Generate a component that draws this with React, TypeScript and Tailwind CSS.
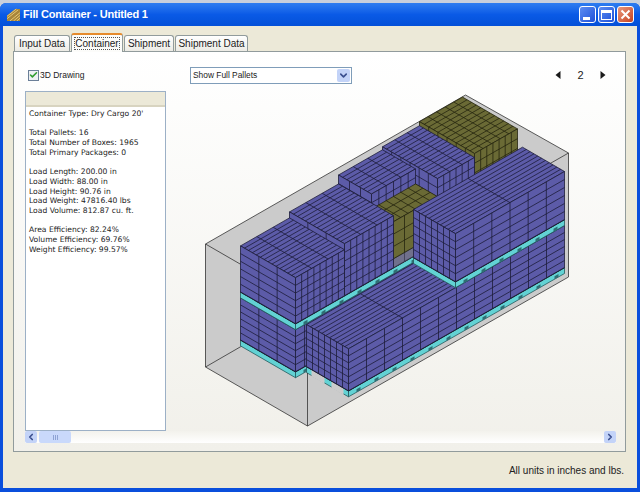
import { ChevronLeft, ChevronRight, Check, ChevronDown } from 'lucide-react';

const PURPLE = '#5c5ba8';
const OLIVE = '#6a6a35';
const CYAN = '#62d2d4';
const EDGE = '#1d1d3a';

type Box = {
  l0: number; l1: number; w0: number; w1: number; h0: number; h1: number;
  fill?: string;
  edge?: string;
  // divisions: right face columns, left face columns, rows, top stripes along l, top blocks along w
  cr?: number; cl?: number; rows?: number; ts?: number; tb?: number;
};

function p(l: number, w: number, h: number): [number, number] {
  return [307 + l - w, 426 - 0.571 * l - 0.578 * w - h];
}

function pts(list: [number, number][]) {
  return list.map((q) => `${q[0].toFixed(1)},${q[1].toFixed(1)}`).join(' ');
}

function Crate({ b }: { b: Box }) {
  const { l0, l1, w0, w1, h0, h1, fill = PURPLE, edge = EDGE, cr = 0, cl = 0, rows = 0, ts = 0, tb = 0 } = b;
  const lines: [number, number][][] = [];
  for (let i = 1; i < cr; i++) {
    const l = l0 + ((l1 - l0) * i) / cr;
    lines.push([p(l, w0, h0), p(l, w0, h1)]);
  }
  for (let i = 1; i < cl; i++) {
    const w = w0 + ((w1 - w0) * i) / cl;
    lines.push([p(l0, w, h0), p(l0, w, h1)]);
  }
  for (let i = 1; i < rows; i++) {
    const h = h0 + ((h1 - h0) * i) / rows;
    lines.push([p(l0, w1, h), p(l0, w0, h)]);
    lines.push([p(l0, w0, h), p(l1, w0, h)]);
  }
  for (let i = 1; i < ts; i++) {
    const w = w0 + ((w1 - w0) * i) / ts;
    lines.push([p(l0, w, h1), p(l1, w, h1)]);
  }
  for (let i = 1; i < tb; i++) {
    const l = l0 + ((l1 - l0) * i) / tb;
    lines.push([p(l, w0, h1), p(l, w1, h1)]);
  }
  return (
    <g stroke={edge} strokeWidth={0.8}>
      <polygon fill={fill} points={pts([p(l0, w0, h1), p(l1, w0, h1), p(l1, w1, h1), p(l0, w1, h1)])} />
      <polygon fill={fill} points={pts([p(l0, w1, h0), p(l0, w0, h0), p(l0, w0, h1), p(l0, w1, h1)])} />
      <polygon fill={fill} points={pts([p(l0, w0, h0), p(l1, w0, h0), p(l1, w0, h1), p(l0, w0, h1)])} />
      {lines.map((q, i) => (
        <line key={i} x1={q[0][0]} y1={q[0][1]} x2={q[1][0]} y2={q[1][1]} />
      ))}
    </g>
  );
}

function Pallet({ l0, l1, w0, w1, h, open }: { l0: number; l1: number; w0: number; w1: number; h: number; open?: boolean }) {
  const notches: number[] = [];
  for (let l = l0 + 8; l < l1; l += 18) notches.push(l);
  const gaps = [
    [w0 + 5, w0 + 17],
    [w0 + 24, w1 - 5],
  ];
  return (
    <g>
      <Crate b={{ l0, l1, w0, w1, h0: h, h1: h + 6, fill: CYAN, edge: '#23595c' }} />
      {notches.map((l) => (
        <polygon key={l} fill="#2f6f74" points={pts([p(l, w0, h), p(l + 4, w0, h), p(l + 4, w0, h + 3), p(l, w0, h + 3)])} />
      ))}
      {open &&
        gaps.map(([a, b]) => (
          <polygon key={a} fill="#cbcbcb" points={pts([p(l0, a, h - 1), p(l0, b, h - 1), p(l0, b, h + 6), p(l0, a, h + 6)])} />
        ))}
      <line x1={p(l0, w0, h + 6)[0]} y1={p(l0, w0, h + 6)[1]} x2={p(l1, w0, h + 6)[0]} y2={p(l1, w0, h + 6)[1]} stroke="#111" strokeWidth={1.2} />
      <line x1={p(l0, w1, h + 6)[0]} y1={p(l0, w1, h + 6)[1]} x2={p(l0, w0, h + 6)[0]} y2={p(l0, w0, h + 6)[1]} stroke="#111" strokeWidth={1.2} />
    </g>
  );
}

function ContainerDrawing() {
  const hull: [number, number][] = [[205, 244], [465, 95], [568, 153], [568, 277], [307, 426], [205, 367]];
  return (
    <svg viewBox="166 91 449 340" className="w-full h-full block">
      <polygon points={pts(hull)} fill="#cbcbcb" stroke="#333" strokeWidth={0.8} />
      <line x1={205} y1={367} x2={250} y2={341} stroke="#333" strokeWidth={0.8} />
      <line x1={205} y1={244} x2={250} y2={270} stroke="#333" strokeWidth={0.8} />
      <line x1={568} y1={153} x2={540} y2={169} stroke="#333" strokeWidth={0.8} />

      {/* back row, lower layer */}
      <Pallet l0={36} l1={262} w0={48} w1={103} h={0} />
      <Crate b={{ l0: 36, l1: 262, w0: 48, w1: 103, h0: 6, h1: 48, cr: 25, cl: 3, rows: 6 }} />
      <Pallet l0={36} l1={262} w0={48} w1={103} h={48} />

      {/* back row, upper layer, far end first */}
      <Crate b={{ l0: 215, l1: 258, w0: 48, w1: 103, h0: 54, h1: 122, fill: OLIVE, edge: '#26260f', cr: 7, cl: 6, rows: 7, ts: 12, tb: 5 }} />
      <Crate b={{ l0: 178, l1: 215, w0: 48, w1: 103, h0: 54, h1: 118, cr: 6, cl: 6, rows: 7, ts: 14, tb: 3 }} />
      <Crate b={{ l0: 134, l1: 178, w0: 70, w1: 103, h0: 54, h1: 115, cr: 6, cl: 3, rows: 7, ts: 8, tb: 3 }} />
      <Crate b={{ l0: 134, l1: 178, w0: 48, w1: 70, h0: 54, h1: 63, fill: '#70708c', edge: '#3a3a50', cr: 4, cl: 2 }} />
      <Crate b={{ l0: 134, l1: 178, w0: 48, w1: 70, h0: 63, h1: 100, fill: OLIVE, edge: '#26260f', cr: 4, cl: 2, rows: 3, ts: 3, tb: 6 }} />
      <Crate b={{ l0: 85, l1: 134, w0: 48, w1: 103, h0: 54, h1: 106, cr: 8, cl: 3, rows: 6, ts: 14, tb: 3 }} />
      <Crate b={{ l0: 36, l1: 85, w0: 48, w1: 103, h0: 54, h1: 100, cr: 8, cl: 3, rows: 6, ts: 14, tb: 3 }} />

      {/* front row */}
      <Pallet l0={46} l1={262} w0={5} w1={47} h={0} open />
      <Crate b={{ l0: 46, l1: 262, w0: 5, w1: 47, h0: 6, h1: 48, cr: 12, cl: 7, rows: 6, ts: 11, tb: 4 }} />
      <Pallet l0={153} l1={262} w0={5} w1={47} h={48} />
      <Crate b={{ l0: 153, l1: 262, w0: 5, w1: 47, h0: 54, h1: 102, cr: 6, cl: 7, rows: 6, ts: 11, tb: 2 }} />

      <line x1={307} y1={373} x2={307} y2={426} stroke="#333" strokeWidth={0.8} />
    </svg>
  );
}

function Tab({ label, width, active }: { label: string; width: string; active?: boolean }) {
  if (active) {
    return (
      <div className={`relative z-10 ${width} h-[19px] -mb-px px-[2px] pt-[2px] text-center bg-[#fcfcfa] border-x border-[#919b9c] border-t-2 border-t-[#e68b2c] rounded-t-[3px]`}>
        <span className="block h-[13px] leading-[12px] border border-dotted border-[#555]">{label}</span>
      </div>
    );
  }
  return (
    <div className={`${width} h-[16px] leading-[15px] text-center bg-gradient-to-b from-white to-[#ecebe5] border-x border-t border-[#919b9c] rounded-t-[3px]`}>
      {label}
    </div>
  );
}

function CaptionButton({ kind }: { kind: 'min' | 'max' | 'close' }) {
  const tone = kind === 'close' ? 'from-[#e8977c] to-[#c6401c]' : 'from-[#5d8cf2] to-[#1f50d8]';
  return (
    <div className={`w-[17px] h-[17px] flex items-center justify-center rounded-[3px] border border-white bg-gradient-to-br ${tone}`}>
      {kind === 'min' && <div className="w-[7px] h-[3px] bg-white mt-[8px] -ml-[3px]" />}
      {kind === 'max' && <div className="w-[11px] h-[10px] border border-t-[3px] border-white" />}
      {kind === 'close' && (
        <svg viewBox="0 0 11 11" className="w-[11px] h-[11px]">
          <path d="M1.5 1.5 L9.5 9.5 M9.5 1.5 L1.5 9.5" stroke="white" strokeWidth={2} />
        </svg>
      )}
    </div>
  );
}

function Triangle({ right }: { right?: boolean }) {
  return (
    <svg viewBox="0 0 6 8" className="w-[6px] h-[8px]">
      <path d={right ? 'M0.5 0 L5.5 4 L0.5 8 Z' : 'M5.5 0 L0.5 4 L5.5 8 Z'} fill="#1a1a1a" />
    </svg>
  );
}

const summary = [
  ["Container Type: Dry Cargo 20'"],
  ['Total Pallets: 16', 'Total Number of Boxes: 1965', 'Total Primary Packages: 0'],
  ['Load Length: 200.00 in', 'Load Width: 88.00 in', 'Load Height: 90.76 in', 'Load Weight: 47816.40 lbs', 'Load Volume: 812.87 cu. ft.'],
  ['Area Efficiency: 82.24%', 'Volume Efficiency: 69.76%', 'Weight Efficiency: 99.57%'],
];

export default function App() {
  return (
    <div className="w-[640px] h-[492px] pt-[3px] bg-[#c9d0dc] overflow-hidden font-['Liberation_Sans',sans-serif] text-[#222]">
      <div className="h-[489px] flex flex-col rounded-t-[6px] overflow-hidden bg-[#0a4fdc] px-[3px] pb-[4px]">
        <div className="h-[23px] -mx-[3px] pl-[7px] pr-[6px] flex items-center justify-between bg-gradient-to-b from-[#2f7df0] via-[#0a5ae6] to-[#0450d8]">
          <div className="flex items-center gap-[3px]">
            <svg viewBox="0 0 14 14" className="w-[13px] h-[13px]">
              <path d="M0 14 V8 L9 1 H14 V14 Z" fill="#a8853a" />
              <path d="M0 9 L10 1 M0 11.5 L12 2 M3 14 L14 5 M7 14 L14 8 M10.5 14 L14 11" stroke="#e8cc7a" strokeWidth={1} />
            </svg>
            <span className="text-white text-[11px] font-bold tracking-[-0.2px]">Fill Container - Untitled 1</span>
          </div>
          <div className="flex gap-[2px]">
            <CaptionButton kind="min" />
            <CaptionButton kind="max" />
            <CaptionButton kind="close" />
          </div>
        </div>

        <div className="flex-1 flex flex-col bg-[#ece9d8] pl-[10px] pr-[11px] pt-[9px] min-h-0">
          <div className="flex items-end gap-[1px] pl-[1px] h-[16px] text-[10px]">
            <Tab label="Input Data" width="w-[56px]" />
            <Tab label="Container" width="w-[52px]" active />
            <Tab label="Shipment" width="w-[50px]" />
            <Tab label="Shipment Data" width="w-[73px]" />
          </div>

          <div className="h-[401px] flex flex-col border border-[#919b9c] bg-gradient-to-b from-white to-[#f1f0ea] pl-[11px] pr-[9px] pb-[8px]">
            <div className="h-[39px] shrink-0 flex items-center pt-[7px]">
              <div className="w-[165px] flex items-center pl-[3px]">
                <div className="w-[11px] h-[11px] flex items-center justify-center bg-[#eef0f4] border border-[#6b7f98]">
                  <Check className="w-[10px] h-[10px] text-[#2e9b2e]" strokeWidth={4} />
                </div>
                <span className="ml-[1px] text-[8.5px]">3D Drawing</span>
              </div>
              <div className="w-[162px] h-[17px] flex items-center justify-between bg-white border border-[#7f9db9] pl-[2px] pr-[1px] text-[8.4px]">
                <span>Show Full Pallets</span>
                <div className="w-[13px] h-[13px] flex items-center justify-center rounded-[2px] bg-[#c3d3f8]">
                  <ChevronDown className="w-[11px] h-[11px] text-[#3b4f8f]" strokeWidth={3.5} />
                </div>
              </div>
              <div className="ml-auto mr-[10px] flex items-center">
                <Triangle />
                <span className="w-[39px] text-center text-[11px]">2</span>
                <Triangle right />
              </div>
            </div>

            <div className="flex-1 flex min-h-0">
              <div className="w-[141px] shrink-0 flex flex-col bg-white border border-[#9cb0c6]">
                <div className="h-[15px] shrink-0 bg-[#ece9d8] border-b-2 border-[#d8d4c0]" />
                <div className="pl-[3px] pt-[2px] text-[7.6px] leading-[9.7px] flex flex-col gap-[9.7px] font-['DejaVu_Sans',sans-serif]">
                  {summary.map((group, i) => (
                    <div key={i}>
                      {group.map((line) => (
                        <div key={line}>{line}</div>
                      ))}
                    </div>
                  ))}
                </div>
              </div>
              <div className="flex-1 min-w-0">
                <ContainerDrawing />
              </div>
            </div>

            <div className="h-[12px] shrink-0 flex items-center bg-gradient-to-b from-[#f3f2ec] to-white">
              <div className="w-[12px] h-[12px] flex items-center justify-center rounded-[2px] bg-[#c3d3f8]">
                <ChevronLeft className="w-[10px] h-[10px] text-[#3b4f8f]" strokeWidth={4} />
              </div>
              <div className="w-[32px] h-[12px] ml-[2px] flex items-center justify-center gap-[1px] rounded-[2px] bg-[#c9d9fb]">
                <div className="w-px h-[5px] bg-[#8ea3d4]" />
                <div className="w-px h-[5px] bg-[#8ea3d4]" />
                <div className="w-px h-[5px] bg-[#8ea3d4]" />
              </div>
              <div className="ml-auto w-[12px] h-[12px] flex items-center justify-center rounded-[2px] bg-[#c3d3f8]">
                <ChevronRight className="w-[10px] h-[10px] text-[#3b4f8f]" strokeWidth={4} />
              </div>
            </div>
          </div>

          <div className="flex-1 flex items-center justify-end pr-[2px] text-[10px]">All units in inches and lbs.</div>
        </div>
      </div>
    </div>
  );
}
